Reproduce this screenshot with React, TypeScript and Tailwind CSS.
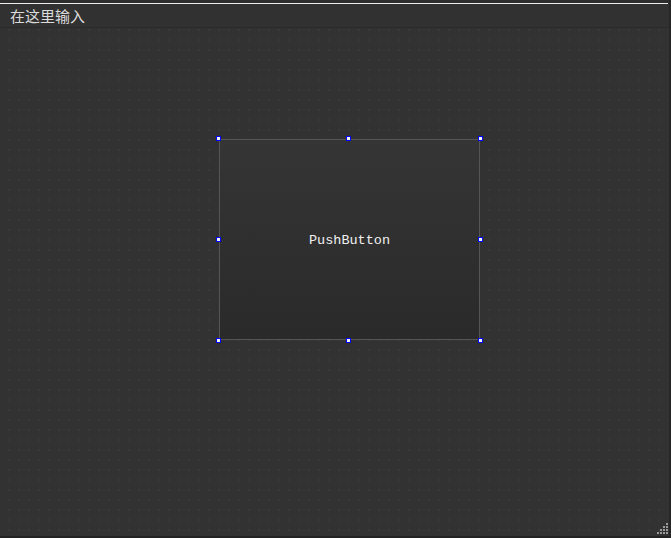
const handles = [
  "left-[216px] top-[136px]",
  "left-[346px] top-[136px]",
  "left-[478px] top-[136px]",
  "left-[216px] top-[237px]",
  "left-[478px] top-[237px]",
  "left-[216px] top-[338px]",
  "left-[346px] top-[338px]",
  "left-[478px] top-[338px]",
];

const SizeGrip = () => (
  <svg width="12" height="12" viewBox="0 0 12 12" className="absolute right-[2px] bottom-[3px]">
    {[
      [9, 0], [6, 3], [9, 3], [3, 6], [6, 6], [9, 6], [0, 9], [3, 9], [6, 9], [9, 9],
    ].map(([x, y], i) => (
      <rect key={i} x={x} y={y} width="2" height="2" fill="#9a9a9a" />
    ))}
  </svg>
);

export default function App() {
  return (
    <div className="w-[671px] h-[538px] bg-[#323232] flex flex-col overflow-hidden relative">
      <div className="h-[3px] bg-[#2d2d2d]" />
      <div className="h-[1px] bg-[#ececec] mr-[3px]" />
      <div className="h-[24px] flex items-center bg-[#313131] border-b border-[#2a2a2a] pl-[10px] mr-[2px]">
        <span className="text-[15px] text-[#dcdcdc] font-['Noto_Sans_CJK_SC',sans-serif] leading-none">
          在这里输入
        </span>
      </div>
      <div className="flex-1 relative mr-[2px] bg-[#323232] bg-[radial-gradient(circle,#393939_0.7px,transparent_0.8px)] bg-[size:10px_10px] bg-[position:4px_-3px]">
      </div>
      <div className="h-[2px] bg-[#232323]" />
      <div className="absolute right-0 top-0 bottom-0 w-[2px] bg-[#262626]" />

      <div className="absolute left-[219px] top-[139px] w-[261px] h-[201px] border border-[#555555] bg-gradient-to-b from-[#353535] to-[#2a2a2a] flex items-center justify-center">
        <span className="text-[13.5px] text-[#f0f0f0] font-['Liberation_Mono',monospace] mt-[3px]">
          PushButton
        </span>
      </div>

      {handles.map((c) => (
        <div key={c} className={`absolute ${c} w-[5px] h-[5px] bg-[#f4f4f4] border border-[#0000ff]`} />
      ))}

      <SizeGrip />
    </div>
  );
}
